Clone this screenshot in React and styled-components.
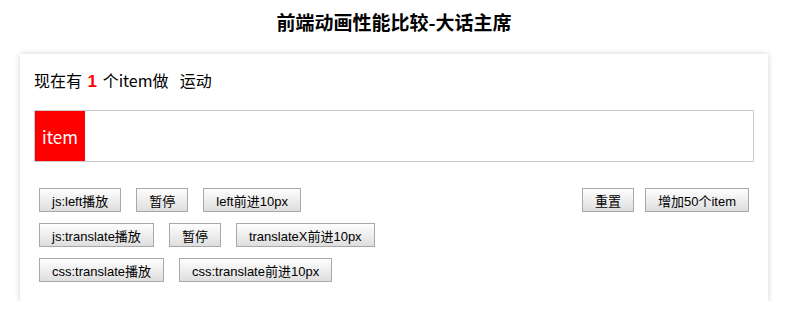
import styled, { createGlobalStyle } from 'styled-components';

const GlobalStyle = createGlobalStyle`
  body {
    margin: 0;
    background: #ffffff;
    font-family: "Liberation Sans", "Noto Sans CJK SC", sans-serif;
    color: #000;
  }
`;

const Page = styled.div`
  width: 748px;
  margin-left: 20px;
`;

const Title = styled.h2`
  margin: 0;
  height: 44px;
  line-height: 44px;
  text-align: center;
  font-size: 19px;
  font-weight: bold;
  font-family: "Noto Sans CJK SC", sans-serif;
`;

const Card = styled.div`
  margin-top: 10px;
  background: #fff;
  box-shadow: 0 0 6px rgba(0, 0, 0, 0.18);
  padding: 14px 14px 20px 14px;
`;

const Status = styled.div`
  height: 24px;
  line-height: 24px;
  font-size: 16px;
  word-spacing: 2px;
  font-family: "Noto Sans CJK SC", sans-serif;
`;

const Count = styled.b`
  color: #ff0000;
  font-family: "Liberation Sans", sans-serif;
  font-size: 17px;
`;

const Track = styled.div`
  margin-top: 18px;
  height: 50px;
  border: 1px solid #cccccc;
  display: flex;
`;

const Item = styled.div`
  width: 50px;
  height: 50px;
  background: #ff0000;
  color: #fff;
  font-size: 17px;
  font-family: "Noto Sans CJK SC", sans-serif;
  display: flex;
  align-items: center;
  justify-content: center;
`;

const Controls = styled.div`
  margin-top: 26px;
  padding: 0 5px;
  display: flex;
  flex-direction: column;
  gap: 11px;
`;

const Row = styled.div`
  display: flex;
  align-items: center;
  gap: 15px;
`;

const Spacer = styled.div`
  flex: 1;
`;

const Button = styled.button`
  height: 24px;
  padding: 0 12px;
  border: 1px solid #a8a8a8;
  border-radius: 0;
  background: linear-gradient(#fefefe, #dedede);
  font-family: "Liberation Sans", "Noto Sans CJK SC", sans-serif;
  font-size: 13px;
  color: #000;
  cursor: pointer;
  margin-right: ${p => p.$mr || 0}px;
`;

export default function App() {
  return (
    <>
      <GlobalStyle />
      <Page>
        <Title>前端动画性能比较-大话主席</Title>
        <Card>
          <Status>
            现在有 <Count>1</Count> 个item做&nbsp;&nbsp;运动
          </Status>
          <Track>
            <Item>item</Item>
          </Track>
          <Controls>
            <Row>
              <Button>js:left播放</Button>
              <Button>暂停</Button>
              <Button>left前进10px</Button>
              <Spacer />
              <Button $mr={-4}>重置</Button>
              <Button>增加50个item</Button>
            </Row>
            <Row>
              <Button>js:translate播放</Button>
              <Button>暂停</Button>
              <Button>translateX前进10px</Button>
            </Row>
            <Row>
              <Button>css:translate播放</Button>
              <Button>css:translate前进10px</Button>
            </Row>
          </Controls>
        </Card>
      </Page>
    </>
  );
}
